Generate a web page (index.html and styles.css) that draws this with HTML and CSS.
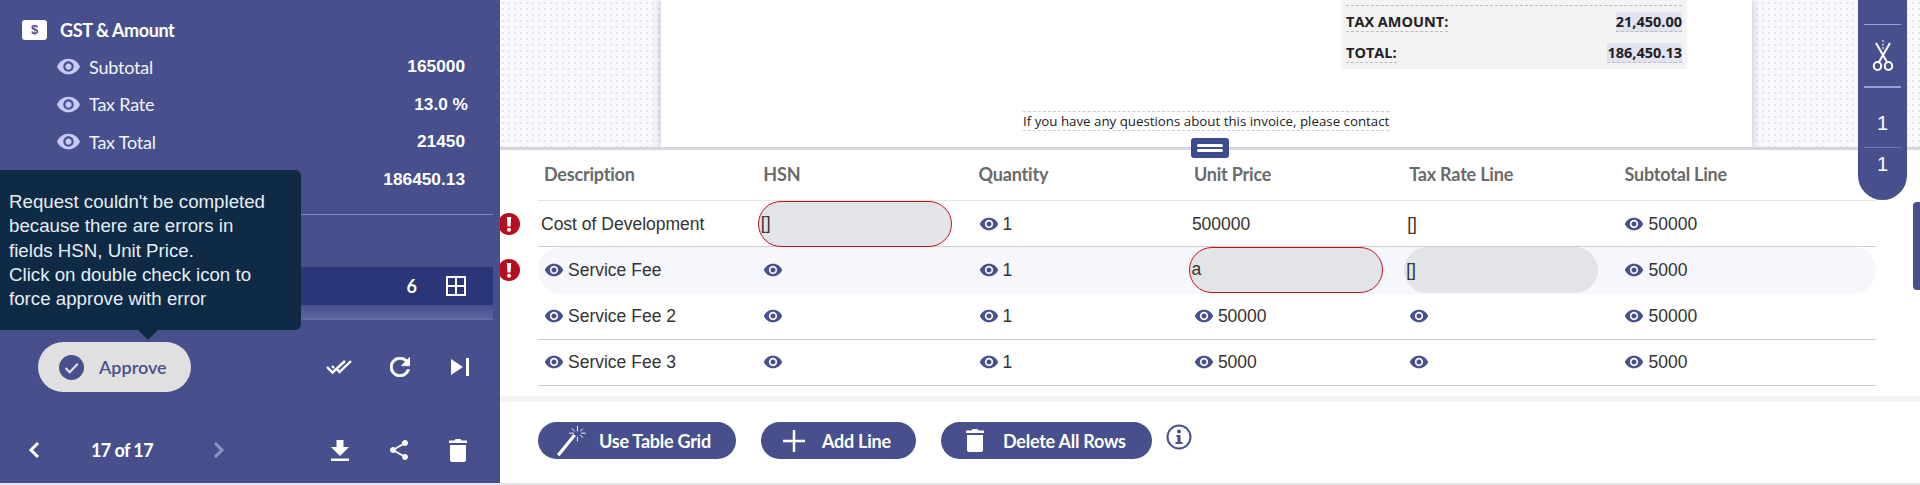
FILE: index.html
```html
<!DOCTYPE html>
<html lang="en">
<head>
    <meta charset="UTF-8">
    <title>Invoice Review</title>
    <link rel="stylesheet" href="styles.css">
</head>
<body>
    <svg class="defs" width="0" height="0">
        <symbol id="eye" viewBox="0 0 24 24"><path d="M12 4.5C7 4.5 2.73 7.61 1 12c1.73 4.39 6 7.5 11 7.5s9.27-3.11 11-7.5c-1.73-4.39-6-7.5-11-7.5zM12 17c-2.76 0-5-2.24-5-5s2.24-5 5-5 5 2.24 5 5-2.24 5-5 5zm0-8c-1.66 0-3 1.34-3 3s1.34 3 3 3 3-1.34 3-3-1.34-3-3-3z"/></symbol>
        <symbol id="alert" viewBox="0 0 22 22"><circle cx="11" cy="11" r="11" fill="#b70d1c"/><path d="M8.800 4h4.400l-.6 9.500H9.400z" fill="#fff"/><circle cx="11" cy="16.800" r="2" fill="#fff"/></symbol>
    </svg>

    <aside class="sidebar">
        <div class="section-title">
            <span class="dollar-box">$</span>
            GST &amp; Amount
        </div>
        <div class="fields">
            <div class="field"><svg class="eye-big"><use href="#eye"/></svg><span class="field-name">Subtotal</span><span class="field-value">165000</span></div>
            <div class="field"><svg class="eye-big"><use href="#eye"/></svg><span class="field-name">Tax Rate</span><span class="field-value pct">13.0 %</span></div>
            <div class="field"><svg class="eye-big"><use href="#eye"/></svg><span class="field-name">Tax Total</span><span class="field-value">21450</span></div>
            <div class="field"><span class="field-value">186450.13</span></div>
        </div>

        <div class="divider"></div>

        <div class="line-row">
            <span>6</span>
            <svg class="grid-icon" viewBox="0 0 20 20"><path d="M1 1h18v18H1zM10 1v18M1 10h18" fill="none" stroke="#fff" stroke-width="2"/></svg>
        </div>
        <div class="line-shadow"></div>

        <div class="actions">
            <button class="approve-btn">
                <svg width="25" height="25" viewBox="0 0 25 25"><circle cx="12.5" cy="12.5" r="12.5" fill="#47508c"/><path d="M6.500 13l4.200 4.200 8-8.400" fill="none" stroke="#e0e0e0" stroke-width="2.200"/></svg>
                Approve
            </button>
            <div class="action-icons">
                <svg width="26" height="16" viewBox="0 0 26 16"><path d="M1 8l5.500 5.500L19 2M6 7l2 2M11 10l2.500 3L25 2" fill="none" stroke="#fff" stroke-width="2.400"/></svg>
                <svg class="white-icon refresh" viewBox="4 4 16 16"><path d="M17.650 6.350C16.200 4.900 14.210 4 12 4c-4.420 0-7.990 3.580-7.990 8s3.570 8 7.990 8c3.730 0 6.840-2.550 7.730-6h-2.080c-.82 2.330-3.040 4-5.650 4-3.310 0-6-2.690-6-6s2.690-6 6-6c1.660 0 3.140.69 4.220 1.780L13 11h7V4l-2.350 2.350z"/></svg>
                <svg class="white-icon skip" viewBox="0 0 18 18"><path d="M0 1l12 8-12 8zM15 0h3v18h-3z"/></svg>
            </div>
        </div>

        <div class="pager">
            <svg class="chev" viewBox="0 0 12 18"><path d="M10 2L3 9l7 7" fill="none" stroke="#fff" stroke-width="3"/></svg>
            <span class="page-count">17 of 17</span>
            <svg class="chev" viewBox="0 0 12 18"><path d="M2 2l7 7-7 7" fill="none" stroke="#8d94c0" stroke-width="3"/></svg>
            <div class="pager-icons">
                <svg class="white-icon download" viewBox="0 0 18 21"><path d="M5.500 0h7v7H18l-9 9-9-9h5.500zM0 18.500h18V21H0z"/></svg>
                <svg class="white-icon share" viewBox="3 2 18 20"><path d="M18 16.080c-.76 0-1.440.3-1.960.77L8.910 12.700c.05-.23.09-.46.09-.7s-.04-.47-.09-.7l7.050-4.110c.54.5 1.250.81 2.040.81 1.660 0 3-1.340 3-3s-1.340-3-3-3-3 1.340-3 3c0 .24.04.47.09.7L8.040 9.810C7.500 9.310 6.790 9 6 9c-1.660 0-3 1.340-3 3s1.340 3 3 3c.79 0 1.500-.31 2.040-.81l7.120 4.160c-.05.21-.08.43-.08.65 0 1.610 1.310 2.920 2.920 2.920 1.610 0 2.920-1.310 2.920-2.920s-1.310-2.920-2.920-2.920z"/></svg>
                <svg class="white-icon bin" viewBox="0 0 18 23"><path d="M1 6h16v15c0 1.100-.9 2-2 2H3c-1.100 0-2-.9-2-2zM0 1.500h5.500L6.500 0h5l1 1.500H18V4H0z"/></svg>
            </div>
        </div>

        <div class="error-tip">
            Request couldn't be completed because there are errors in fields HSN, Unit Price.<br>
            Click on double check icon to force approve with error
        </div>
    </aside>

    <main class="main">
        <section class="preview">
            <div class="page">
                <div class="summary">
                    <div class="sum-row cut"></div>
                    <div class="sum-row"><span class="sum-label">TAX AMOUNT:</span><span class="sum-value">21,450.00</span></div>
                    <div class="sum-row"><span class="sum-label">TOTAL:</span><span class="sum-value">186,450.13</span></div>
                </div>
                <div class="contact"><span>If you have any questions about this invoice, please contact</span></div>
            </div>
        </section>
        <div class="resize-handle"><span></span><span></span></div>

        <section class="lines">
            <div class="row head">
                <div class="cell">Description</div><div class="cell">HSN</div><div class="cell">Quantity</div><div class="cell">Unit Price</div><div class="cell">Tax Rate Line</div><div class="cell">Subtotal Line</div>
            </div>
            <div class="row">
                <svg class="row-alert"><use href="#alert"/></svg>
                <div class="cell no-eye">Cost of Development</div>
                <div class="cell"><div class="input bad">[]</div></div>
                <div class="cell"><svg class="eye"><use href="#eye"/></svg>1</div>
                <div class="cell plain">500000</div>
                <div class="cell plain">[]</div>
                <div class="cell"><svg class="eye"><use href="#eye"/></svg>50000</div>
            </div>
            <div class="row shaded">
                <svg class="row-alert"><use href="#alert"/></svg>
                <div class="cell"><svg class="eye"><use href="#eye"/></svg>Service Fee</div>
                <div class="cell"><svg class="eye"><use href="#eye"/></svg></div>
                <div class="cell"><svg class="eye"><use href="#eye"/></svg>1</div>
                <div class="cell"><div class="input bad">a</div></div>
                <div class="cell"><div class="input">[]</div></div>
                <div class="cell"><svg class="eye"><use href="#eye"/></svg>5000</div>
            </div>
            <div class="row">
                <div class="cell"><svg class="eye"><use href="#eye"/></svg>Service Fee 2</div>
                <div class="cell"><svg class="eye"><use href="#eye"/></svg></div>
                <div class="cell"><svg class="eye"><use href="#eye"/></svg>1</div>
                <div class="cell"><svg class="eye"><use href="#eye"/></svg>50000</div>
                <div class="cell"><svg class="eye"><use href="#eye"/></svg></div>
                <div class="cell"><svg class="eye"><use href="#eye"/></svg>50000</div>
            </div>
            <div class="row">
                <div class="cell"><svg class="eye"><use href="#eye"/></svg>Service Fee 3</div>
                <div class="cell"><svg class="eye"><use href="#eye"/></svg></div>
                <div class="cell"><svg class="eye"><use href="#eye"/></svg>1</div>
                <div class="cell"><svg class="eye"><use href="#eye"/></svg>5000</div>
                <div class="cell"><svg class="eye"><use href="#eye"/></svg></div>
                <div class="cell"><svg class="eye"><use href="#eye"/></svg>5000</div>
            </div>
        </section>

        <div class="band"></div>

        <section class="toolbar">
            <button class="btn wand">
                <svg width="30" height="33" viewBox="0 0 32 36"><path d="M2 34L20 12" fill="none" stroke="#fff" stroke-width="3.500"/><path d="M23 2v6M23 14v5M14 10h5M27 10h5M17 5l3 3M29 15l-3-3M29 5l-3 3" fill="none" stroke="#fff" stroke-width="1"/></svg>
                Use Table Grid
            </button>
            <button class="btn plus">
                <svg width="24" height="24" viewBox="0 0 24 24"><path d="M12 1v22M1 12h22" fill="none" stroke="#fff" stroke-width="2.500"/></svg>
                Add Line
            </button>
            <button class="btn trash">
                <svg class="white-icon" width="18" height="23" viewBox="0 0 18 23"><path d="M1 6h16v15c0 1.100-.9 2-2 2H3c-1.100 0-2-.9-2-2zM0 1.500h5.500L6.500 0h5l1 1.500H18V4H0z"/></svg>
                Delete All Rows
            </button>
            <svg class="info" viewBox="0 0 26 26"><circle cx="13" cy="13" r="11.500" fill="none" stroke="#47508c" stroke-width="2"/><circle cx="13" cy="7.500" r="2" fill="#47508c"/><path d="M10.500 11h4v7h2v2h-7v-2h2v-5h-1z" fill="#47508c"/></svg>
        </section>
    </main>

    <div class="rail">
        <div class="rail-cell tool">
            <svg width="22" height="32" viewBox="0 0 22 32"><path d="M11 0v9" stroke="#c7caf7" stroke-width="1.500" stroke-dasharray="2 1.500" fill="none"/><path d="M4 3l11 19M18 3L7 22" stroke="#fff" stroke-width="2" fill="none"/><ellipse cx="5.500" cy="26" rx="3.700" ry="4" fill="none" stroke="#fff" stroke-width="2"/><ellipse cx="16.500" cy="26" rx="3.700" ry="4" fill="none" stroke="#fff" stroke-width="2"/></svg>
        </div>
        <div class="rail-cell num">1</div>
        <div class="rail-cell num last">1</div>
    </div>
    <div class="scroll-thumb"></div>
</body>
</html>
```

FILE: styles.css
```css
* {
    box-sizing: border-box;
}
html, body {
    margin: 0;
    height: 485px;
    overflow: hidden;
}
body {
    display: flex;
    position: relative;
    font-family: "Liberation Sans", Arial, sans-serif;
    background: #e8eaf5;
}
.defs {
    position: absolute;
}

/* left panel */
.sidebar {
    position: relative;
    z-index: 2;
    flex: 0 0 500px;
    height: 483px;
    padding-top: 16px;
    background: #47508c;
    color: #fff;
}
.section-title {
    display: flex;
    align-items: center;
    gap: 13px;
    height: 27px;
    padding-left: 22px;
    font: 700 18px Lato, sans-serif;
    letter-spacing: -0.4px;
}
.dollar-box {
    width: 25px;
    height: 20px;
    border-radius: 3px;
    background: #fff;
    color: #47508c;
    font: 700 13px/20px "Liberation Sans", sans-serif;
    text-align: center;
    letter-spacing: 0;
}
.fields {
    margin-top: 5px;
}
.field {
    display: flex;
    align-items: center;
    height: 37.500px;
    padding-left: 56px;
    padding-right: 35px;
}
.eye-big {
    width: 25px;
    height: 25px;
    margin-right: 8px;
    fill: #c7caf7;
}
.field-name {
    font: 400 18px Lato, sans-serif;
    letter-spacing: -0.2px;
    color: #f2f3fb;
}
.field-value {
    margin-left: auto;
    font-weight: 700;
    font-size: 17.300px;
}
.field-value.pct {
    margin-right: -3px;
}
.divider {
    height: 1px;
    margin: 16px 7px 0 0;
    background: #7b84d0;
}
.line-row {
    display: flex;
    align-items: center;
    justify-content: flex-end;
    height: 38px;
    margin: 52px 7px 0 0;
    padding-right: 27px;
    background: #2b3678;
    font: 700 18px Lato, sans-serif;
}
.grid-icon {
    width: 20px;
    height: 20px;
    margin-left: 29px;
}
.line-shadow {
    height: 15px;
    margin-right: 7px;
    background: linear-gradient(#47508c, #5a639f 85%, #6b74ac);
}
.actions {
    display: flex;
    align-items: center;
    height: 50px;
    margin-top: 22px;
    padding-left: 38px;
}
.approve-btn {
    display: flex;
    align-items: center;
    gap: 15px;
    width: 153px;
    height: 50px;
    padding: 0 0 0 21px;
    border: 0;
    border-radius: 25px;
    background: #e0e0e0;
    color: #47508c;
    font: 600 18px Lato, sans-serif;
}
.action-icons {
    display: flex;
    align-items: center;
    margin-left: 135px;
    gap: 38px;
}
.white-icon {
    fill: #fff;
}
.refresh {
    width: 20px;
    height: 20px;
    stroke: #fff;
    stroke-width: 0.5px;
}
.skip {
    width: 18px;
    height: 18px;
    margin-left: 3px;
}
.pager {
    display: flex;
    align-items: center;
    height: 40px;
    margin-top: 38px;
    padding-left: 28px;
}
.chev {
    width: 12px;
    height: 18px;
}
.page-count {
    width: 173px;
    padding-right: 9px;
    text-align: center;
    font: 700 18px Lato, sans-serif;
    letter-spacing: -0.6px;
}
.pager-icons {
    display: flex;
    align-items: center;
    gap: 41px;
    margin-left: 106px;
}
.download {
    width: 18px;
    height: 21px;
}
.share {
    width: 18px;
    height: 20px;
}
.bin {
    width: 18px;
    height: 23px;
}
.error-tip {
    position: absolute;
    left: 0;
    top: 170px;
    width: 301px;
    height: 160px;
    padding: 20px 20px 0 9px;
    border-radius: 0 6px 6px 0;
    background: #0f2a45;
    color: #e6eef5;
    font-size: 18.700px;
    line-height: 24.300px;
}
.error-tip::after {
    content: "";
    position: absolute;
    left: 138px;
    top: 160px;
    border: 10px solid transparent;
    border-top-color: #0f2a45;
    border-bottom: 0;
}

/* document preview */
.main {
    flex: 1;
    min-width: 0;
    display: flex;
    flex-direction: column;
    background: #fff;
}
.preview {
    flex: none;
    height: 150px;
    padding-left: 161px;
    overflow: hidden;
    background-color: #f9f9fd;
    background-image: radial-gradient(#e1e3ed 1px, transparent 1.300px);
    background-size: 6px 6px;
    border-bottom: 3px solid #d5d6de;
}
.page {
    width: 1091px;
    height: 147px;
    padding-left: 680px;
    background: #fff;
    box-shadow: 0 0 9px rgba(90, 95, 130, 0.4);
    font-family: "Open Sans", sans-serif;
    color: #222;
}
.summary {
    width: 346px;
    height: 69px;
    padding: 0 5px;
    background: #f3f3f3;
}
.sum-row {
    display: flex;
    justify-content: space-between;
    align-items: center;
    height: 31px;
    font-size: 14.500px;
    font-weight: 700;
}
.sum-row.cut {
    height: 6px;
    border-bottom: 1px dashed #bbb;
}
.sum-label {
    border-bottom: 1px dashed #bbb;
}
.sum-value {
    background: #e1e3f3;
    border-bottom: 1px dashed #bbb;
}
.contact {
    width: 346px;
    margin: 43px 0 0 0;
    font-size: 13.300px;
    white-space: nowrap;
}
.contact span {
    margin-left: -318px;
    border: 1px dashed #ccc;
    border-width: 1px 0;
}
.resize-handle {
    position: absolute;
    left: 1191px;
    top: 138px;
    display: flex;
    flex-direction: column;
    justify-content: center;
    gap: 2px;
    width: 38px;
    height: 20px;
    padding: 0 6px;
    border-radius: 3px;
    background: #3c4a8e;
}
.resize-handle span {
    height: 3px;
    border-radius: 2px;
    background: #fff;
}

/* line items */
.lines {
    flex: none;
    height: 236px;
    padding: 0 44px 0 38px;
    background: #fff;
}
.row {
    position: relative;
    display: grid;
    grid-template-columns: repeat(6, 215.300px);
    align-items: center;
    height: 46.250px;
    border-bottom: 1px solid #ccc;
    color: #333;
    font-size: 17.500px;
}
.row.head {
    height: 51px;
    padding-bottom: 2px;
    border-bottom-color: #e4e4e4;
    color: #6a6a6a;
    font: 700 18px Lato, sans-serif;
    letter-spacing: -0.2px;
}
.row.shaded {
    border-bottom-color: transparent;
    border-radius: 23px;
    background: #f5f7fc;
}
.cell {
    display: flex;
    align-items: center;
    padding-left: 10px;
}
.row .cell:first-of-type {
    padding-left: 6px;
}
.row .cell.no-eye:first-of-type {
    padding-left: 3px;
}
.cell.plain {
    padding-left: 8px;
}
.eye {
    flex: none;
    width: 20px;
    height: 20px;
    margin-right: 4px;
    fill: #47508c;
}
.input {
    width: 194px;
    height: 46px;
    margin-left: -5px;
    padding-left: 2px;
    border-radius: 23px;
    background: #e3e4e8;
    line-height: 46px;
}
.input.bad {
    border: 1.500px solid #c1121f;
    line-height: 43px;
    padding-left: 1.500px;
}
.row-alert {
    position: absolute;
    left: -40px;
    top: 12px;
    width: 22px;
    height: 22px;
}
.band {
    flex: none;
    height: 6px;
    margin-top: 10px;
    background: #f3f3f3;
}
.toolbar {
    flex: none;
    display: flex;
    align-items: center;
    gap: 25px;
    height: 83px;
    padding: 0 0 4px 38px;
    border-bottom: 2px solid #e2e2e2;
}
.btn {
    display: flex;
    align-items: center;
    height: 37px;
    border: 0;
    border-radius: 19px;
    background: #47508c;
    color: #fff;
    font: 700 18px Lato, sans-serif;
    letter-spacing: -0.25px;
}
.btn.wand {
    width: 198px;
    padding: 0 0 0 18px;
    gap: 13px;
}
.btn.plus {
    width: 155px;
    padding: 0 0 0 21px;
    gap: 16px;
}
.btn.trash {
    width: 211px;
    padding: 0 0 0 25px;
    gap: 19px;
}
.info {
    width: 26px;
    height: 26px;
    margin: -7px 0 0 -11px;
}

/* right rail */
.rail {
    position: absolute;
    z-index: 1;
    left: 1858px;
    top: 0;
    width: 49px;
    height: 200px;
    padding-top: 24px;
    border-radius: 0 0 25px 25px;
    background: #47508c;
    color: #fff;
    font-size: 20px;
    text-align: center;
}
.rail-cell {
    display: flex;
    align-items: center;
    justify-content: center;
    margin: 0 6px;
    border-top: 1px solid #98a0d8;
}
.rail-cell.tool {
    height: 62px;
}
.rail-cell.num {
    height: 61px;
    border-top-width: 2px;
    padding-top: 11px;
}
.rail-cell.num.last {
    height: 40px;
    border-top: 1px solid #6f78b5;
    padding-top: 0;
    padding-bottom: 6px;
}
.scroll-thumb {
    position: absolute;
    left: 1913px;
    top: 202px;
    width: 7px;
    height: 88px;
    border-radius: 4px 0 0 4px;
    background: #47508c;
}
```
